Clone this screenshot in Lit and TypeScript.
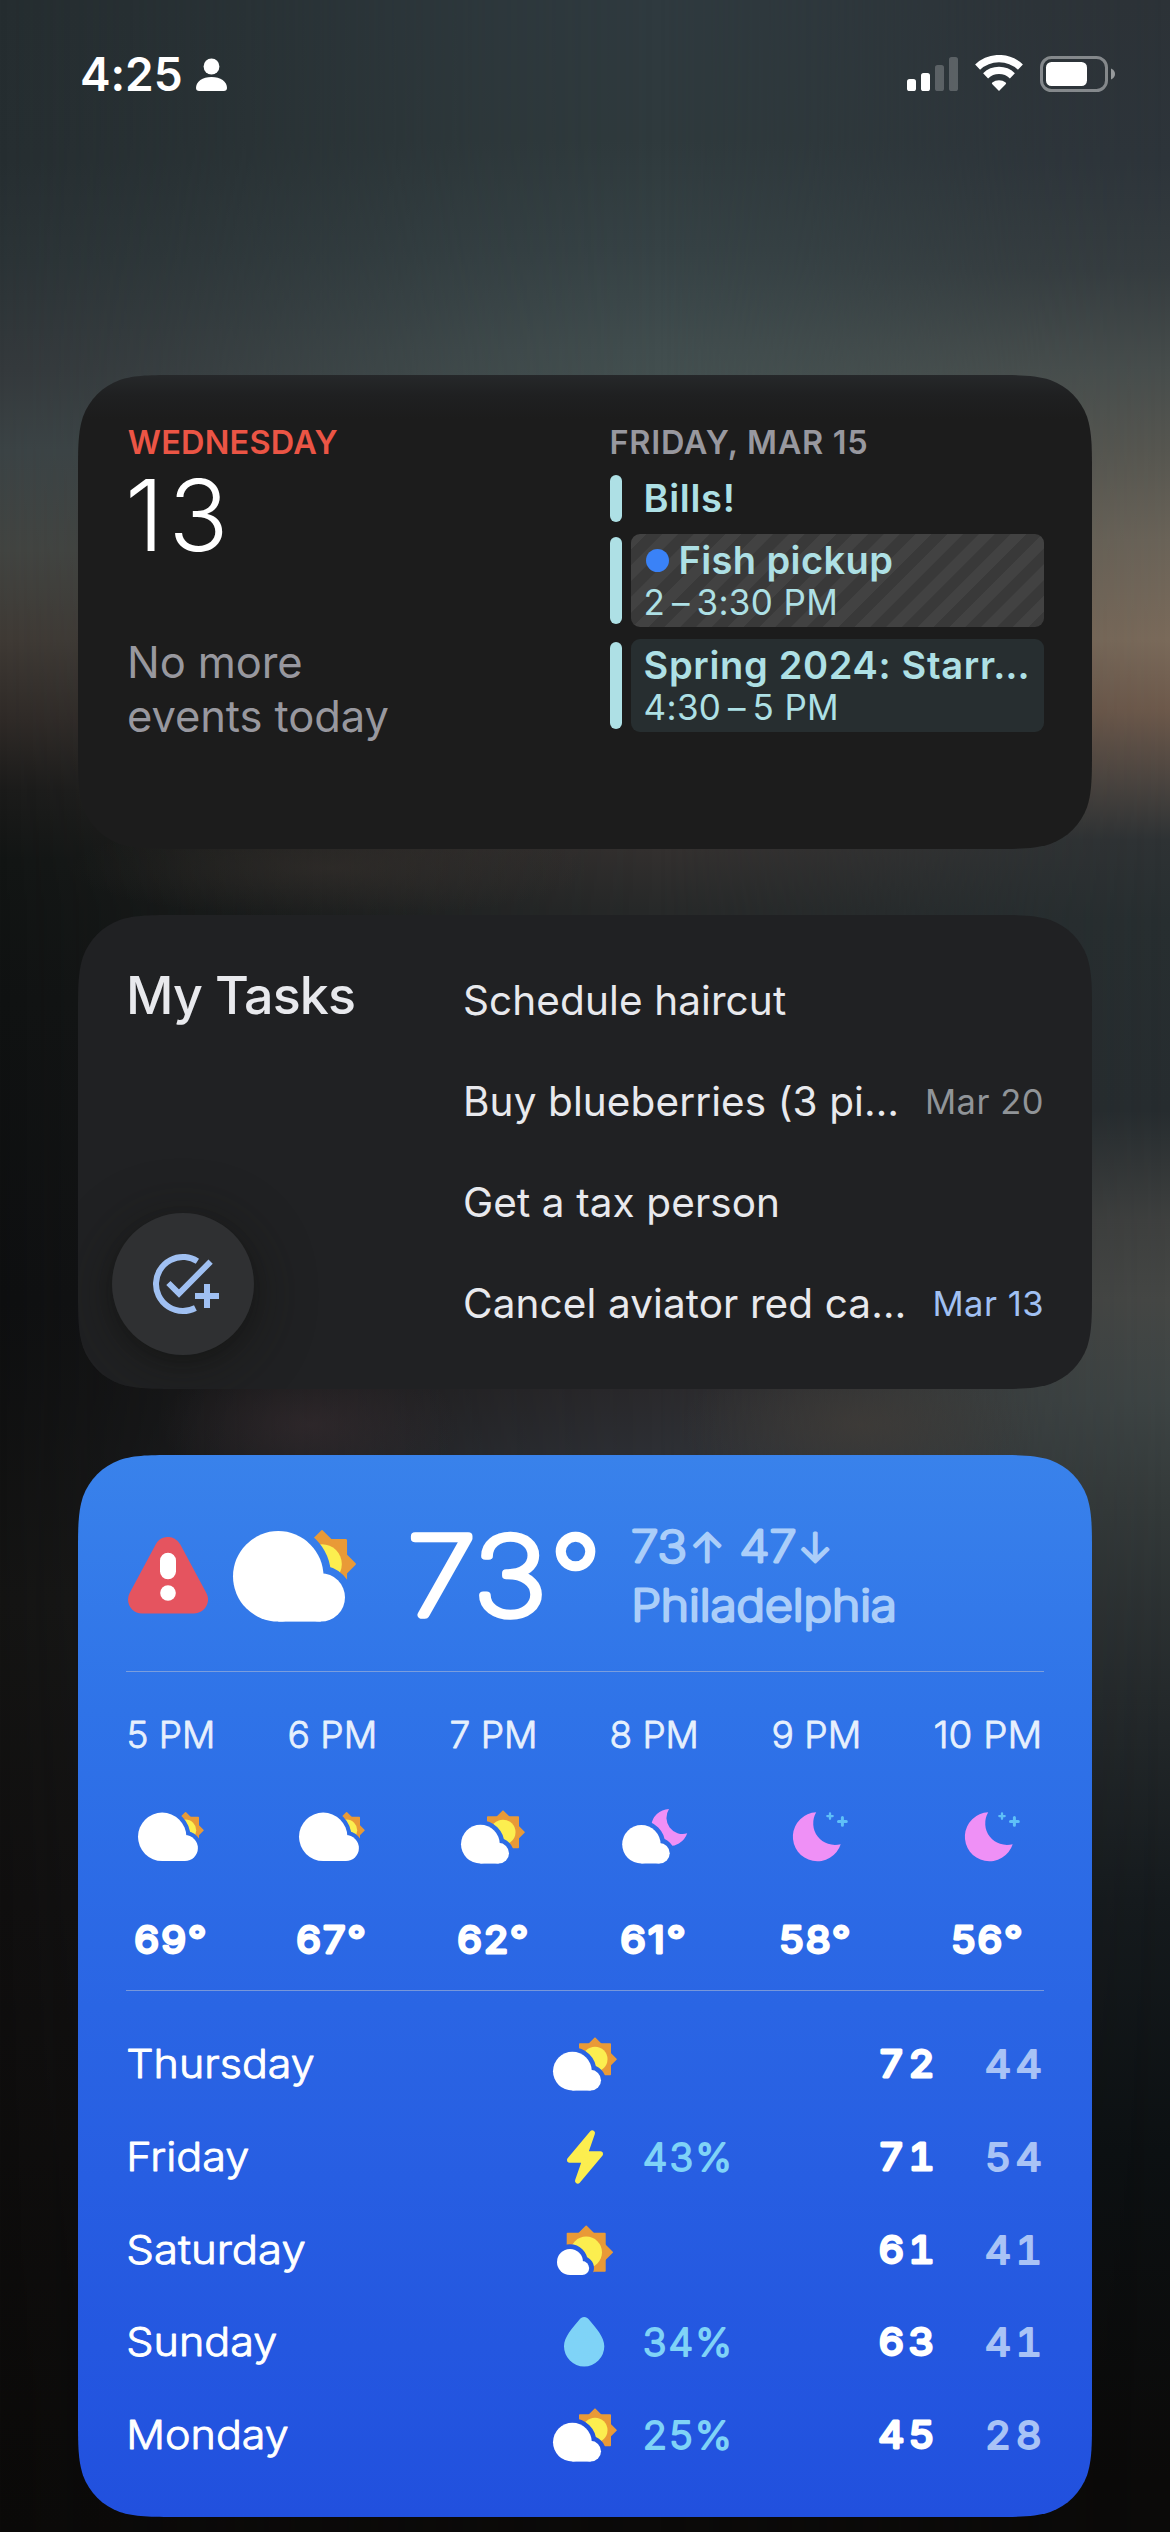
import { LitElement, html, svg, css, unsafeCSS, nothing } from "lit";
import { customElement, property } from "lit/decorators.js";

const CARD_W = 1014;

/** Rounded rectangle with continuous-curvature corners, as a path string. */
function smoothRect(w: number, h: number, r: number): string {
  const a = 1.528665 * r, b = 1.088493 * r, c = 0.868407 * r, d = 0.631494 * r;
  const e = 0.074911 * r, f = 0.372824 * r, g = 0.16906 * r;
  const n = (v: number) => v.toFixed(2);
  const p = (x: number, y: number) => `${n(x)} ${n(y)}`;
  return [
    `M${p(a, 0)}L${p(w - a, 0)}`,
    `C${p(w - b, 0)} ${p(w - c, 0)} ${p(w - d, e)}`,
    `C${p(w - f, g)} ${p(w - g, f)} ${p(w - e, d)}`,
    `C${p(w, c)} ${p(w, b)} ${p(w, a)}L${p(w, h - a)}`,
    `C${p(w, h - b)} ${p(w, h - c)} ${p(w - e, h - d)}`,
    `C${p(w - g, h - f)} ${p(w - f, h - g)} ${p(w - d, h - e)}`,
    `C${p(w - c, h)} ${p(w - b, h)} ${p(w - a, h)}L${p(a, h)}`,
    `C${p(b, h)} ${p(c, h)} ${p(d, h - e)}`,
    `C${p(f, h - g)} ${p(g, h - f)} ${p(e, h - d)}`,
    `C${p(0, h - c)} ${p(0, h - b)} ${p(0, h - a)}L${p(0, a)}`,
    `C${p(0, b)} ${p(0, c)} ${p(e, d)}`,
    `C${p(g, f)} ${p(f, g)} ${p(d, e)}`,
    `C${p(c, 0)} ${p(b, 0)} ${p(a, 0)}Z`,
  ].join("");
}
const MEDIUM_SHAPE = unsafeCSS(`path("${smoothRect(CARD_W, 474, 66)}")`);
const LARGE_SHAPE = unsafeCSS(`path("${smoothRect(CARD_W, 1062, 66)}")`);

/**
 * Text with rounded terminals: a light weight thickened by a round-joined
 * stroke. `cap` is the outer cap height, `w` the outer width of the ink.
 */
function soft(text: string, w: number, cap: number, weight: number, stroke: number, cls = "") {
  const size = (cap - stroke) / 0.727;
  const bearing = 0.055 * size;
  return html`<svg class="soft ${cls}" width=${w} height=${cap}>
    <text x=${stroke / 2 - bearing} y=${cap - stroke / 2} font-size=${size} font-weight=${weight}
      stroke-width=${stroke} textLength=${w - stroke + 2 * bearing} lengthAdjust="spacingAndGlyphs">${text}</text>
  </svg>`;
}

type Sky = "mostly-cloudy" | "partly-cloudy" | "mostly-sunny" | "cloudy-night" | "clear-night" | "storm" | "rain";

const cloud = (cx: number, cy: number, r: number) => {
  const s = 0.535 * r;
  const sx = cx + 0.94 * r;
  return svg`<circle cx=${cx} cy=${cy} r=${r}/><circle cx=${sx} cy=${cy + r - s} r=${s}/><rect x=${cx} y=${cy} width=${sx - cx} height=${r}/>`;
};

const sun = (cx: number, cy: number, tip: number, half: number, core: number) => svg`
  <g fill="#e99a37" stroke="#e99a37" stroke-width="1.6" stroke-linejoin="round">
    <rect x=${cx - half + 0.8} y=${cy - half + 0.8} width=${2 * half - 1.6} height=${2 * half - 1.6}/>
    <path d="M${cx} ${cy - tip + 1}L${cx + tip - 1} ${cy}L${cx} ${cy + tip - 1}L${cx - tip + 1} ${cy}Z"/>
  </g>
  <circle cx=${cx} cy=${cy} r=${core} fill="#fcee4f"/>`;

const behindCloud = (w: number, h: number, c: [number, number, number], gap: number, back: unknown) => svg`
  <mask id="cut" maskUnits="userSpaceOnUse" x="0" y="0" width=${w} height=${h}>
    <rect width=${w} height=${h} fill="#fff"/>
    <g fill="#000" stroke="#000" stroke-width=${gap * 2}>${cloud(...c)}</g>
  </mask>
  <g mask="url(#cut)">${back}</g>
  <g fill="#fff">${cloud(...c)}</g>`;

const star = (x: number, y: number, r: number) => svg`
  <path d="M${x} ${y - r + 1.3}V${y + r - 1.3}M${x - r + 1.3} ${y}H${x + r - 1.3}" stroke="#5fc0f8" stroke-width=${r * 0.58} stroke-linecap="round"/>`;

const SKIES: Record<Sky, { w: number; h: number; art: () => unknown }> = {
  "mostly-cloudy": { w: 66, h: 49, art: () => behindCloud(66, 49, [24.2, 24.8, 24.2], 4, sun(47.6, 18.2, 18.3, 13.4, 10.6)) },
  "partly-cloudy": { w: 64, h: 54, art: () => behindCloud(64, 54, [19.4, 34.2, 19.4], 4.6, sun(42, 22.2, 22, 16, 12.5)) },
  "mostly-sunny": { w: 56, h: 50, art: () => behindCloud(56, 56, [13, 37, 13], 4.8, sun(29.2, 27.3, 27, 19.5, 15.8)) },
  "cloudy-night": {
    w: 66, h: 55,
    art: () => behindCloud(68, 55, [20.4, 35.3, 19.2], 4.6, svg`<path fill="#ef90f6" d="M48 0A16.2 16.2 0 0 0 66.2 24.3A18.5 18.5 0 1 1 48 0Z"/>`),
  },
  "clear-night": {
    w: 64, h: 49,
    art: () => svg`<g transform="translate(9)"><path fill="#ef90f6" d="M23.2 .3A21.7 21.7 0 0 0 47.7 32.2A24.5 24.5 0 1 1 23.2 .3Z"/>${star(37, 4.1, 4)}${star(49.4, 9.4, 5.2)}</g>`,
  },
  storm: {
    w: 36, h: 54,
    art: () => svg`<path fill="#fcee4f" stroke="#fcee4f" stroke-width="5.4" stroke-linejoin="round" d="M25.3 3L18 24H33.3L10.7 51L18 30H2.7Z"/>`,
  },
  rain: {
    w: 41, h: 50,
    art: () => svg`<path fill="#7fd3f7" d="M20.2 0c2 0 3.5 1 4.7 2.6C32 11 40.3 20 40.3 29.3A20.15 20.15 0 0 1 0 29.3C0 20 8.4 11 15.5 2.6C16.7 1 18.2 0 20.2 0Z"/>`,
  },
};

@customElement("sky-icon")
class SkyIcon extends LitElement {
  static styles = css`
    :host { display: block; }
    .art { display: block; overflow: visible; }
  `;
  @property() sky: Sky = "mostly-cloudy";
  @property({ type: Number }) scale = 1;
  render() {
    const { w, h, art } = SKIES[this.sky];
    return html`<svg class="art" viewBox="0 0 ${w} ${h}" width=${w * this.scale} height=${h * this.scale} fill="none">${art()}</svg>`;
  }
}

@customElement("status-bar")
class StatusBar extends LitElement {
  static styles = css`
    :host { display: flex; justify-content: space-between; padding: 55px 54px 0 80px; height: 320px; box-sizing: border-box; color: #fff; }
    .left { display: flex; height: 40px; }
    .time { font-size: 46px; font-weight: 600; line-height: 39px; letter-spacing: -0.1px; margin-right: 13px; }
    .right { display: flex; gap: 17px; height: 40px; }
  `;
  render() {
    return html`
      <div class="left">
        <span class="time">4:25</span>
        <svg width="31" height="40" viewBox="0 0 31 40" fill="#fff">
          <ellipse cx="15.5" cy="11.5" rx="7.9" ry="8"/>
          <path d="M0 33C0 26.5 6.5 22 15.5 22S31 26.5 31 33C31 35 29.8 36 27.8 36H3.2C1.2 36 0 35 0 33Z"/>
        </svg>
      </div>
      <div class="right">
        <svg width="51" height="40" fill="#fff">
          <rect x="0" y="24" width="9" height="12" rx="2.6"/>
          <rect x="14" y="18" width="9" height="18" rx="2.6"/>
          <rect x="28" y="10" width="9" height="26" rx="2.6" fill-opacity=".22"/>
          <rect x="42" y="2" width="9" height="34" rx="2.6" fill-opacity=".22"/>
        </svg>
        <svg width="48" height="40" viewBox="0 0 48 40" fill="none">
          <path d="M2.6 12.1A31 31 0 0 1 45.4 12.1" stroke="#fff" stroke-width="7.2"/>
          <path d="M10.6 20.8A19.4 19.4 0 0 1 37.4 20.8" stroke="#fff" stroke-width="7.2"/>
          <path d="M24 36L17.1 28.9Q16.6 28.2 17.3 27.6A11 11 0 0 1 30.7 27.6Q31.4 28.2 30.9 28.9Z" fill="#fff"/>
        </svg>
        <svg width="76" height="40" viewBox="0 0 76 40">
          <rect x="1.5" y="2.5" width="65" height="33" rx="10" fill="none" stroke="#fff" stroke-opacity=".42" stroke-width="3"/>
          <rect x="6" y="7" width="41" height="24" rx="5.5" fill="#fff"/>
          <path d="M71 13.5C73.6 14.5 75 16.6 75 19S73.6 23.5 71 24.5Z" fill="#fff" fill-opacity=".5"/>
        </svg>
      </div>`;
  }
}

interface CalendarEvent { title: string; time?: string; kind: "all-day" | "tentative" | "accepted"; unread?: boolean }

@customElement("calendar-widget")
class CalendarWidget extends LitElement {
  static styles = css`
    :host {
      display: grid; grid-template-columns: 482.5px 434.5px; align-content: start;
      box-sizing: border-box; width: 1014px; height: 474px; padding: 47.5px 48px 0 49px;
      background: linear-gradient(#26282a, #1f2021 20px, #1c1c1c 44px);
      clip-path: ${MEDIUM_SHAPE};
    }
    .heading { font-size: 32.5px; font-weight: 600; line-height: 40px; white-space: nowrap; }
    .today { color: #eb5545; letter-spacing: 0.2px; padding-left: 0.8px; }
    .next { color: #98989f; letter-spacing: 0.7px; margin-bottom: 12.5px; }
    .date { font-size: 99px; font-weight: 300; line-height: 100px; letter-spacing: 4.5px; color: #fff; margin: 2px 0 70px -2px; }
    .empty { font-size: 43.5px; line-height: 54px; letter-spacing: -0.1px; color: #98989f; }
    .events { display: flex; flex-direction: column; gap: 12px; color: #aee0e5; }
    .event { display: flex; gap: 9px; }
    .bar { width: 12px; margin: 3px 0; border-radius: 6px; background: #aee0e5; }
    .all-day .bar { margin: 0; }
    .body { flex: 1; border-radius: 9px; padding: 4.7px 0 0 13px; height: 93px; box-sizing: border-box; white-space: nowrap; }
    .all-day .body { height: 47px; padding-top: 0; }
    .all-day .title { line-height: 47px; }
    .tentative .body { background: repeating-linear-gradient(135deg, #424242 0 10.6px, #393939 11.2px 21.8px, #424242 22.4px); }
    .accepted .body { background: #272e30; }
    .title { display: flex; align-items: center; font-size: 38px; font-weight: 600; line-height: 43px; letter-spacing: 0.68px; }
    .tentative .title { letter-spacing: 0.4px; }
    .dot { width: 23px; height: 23px; border-radius: 50%; background: #3a82f7; margin: 0 10px 0 2px; }
    .time { font-size: 35px; line-height: 40px; letter-spacing: 0.35px; }
  `;
  private events: CalendarEvent[] = [
    { title: "Bills!", kind: "all-day" },
    { title: "Fish pickup", time: "2\u2009–\u20093:30 PM", kind: "tentative", unread: true },
    { title: "Spring 2024: Starr…", time: "4:30\u2009–\u20095 PM", kind: "accepted" },
  ];
  render() {
    return html`
      <div>
        <div class="heading today">WEDNESDAY</div>
        <div class="date">13</div>
        <div class="empty">No more<br>events today</div>
      </div>
      <div>
        <div class="heading next">FRIDAY, MAR 15</div>
        <div class="events">
          ${this.events.map((e) => html`
            <div class="event ${e.kind}">
              <div class="bar"></div>
              <div class="body">
                <div class="title">${e.unread ? html`<span class="dot"></span>` : nothing}${e.title}</div>
                ${e.time ? html`<div class="time">${e.time}</div>` : nothing}
              </div>
            </div>`)}
        </div>
      </div>`;
  }
}

@customElement("tasks-widget")
class TasksWidget extends LitElement {
  static styles = css`
    :host {
      display: grid; grid-template-columns: 337px 581px;
      box-sizing: border-box; width: 1014px; height: 474px; padding: 0 48px 0 48px;
      background: #202123; color: #e8e9ed; clip-path: ${MEDIUM_SHAPE};
    }
    .side { display: flex; flex-direction: column; justify-content: space-between; padding: 50.5px 0 34px; }
    .name { font-size: 52px; font-weight: 500; line-height: 60px; letter-spacing: -0.9px; }
    .add {
      display: grid; place-items: center; width: 142px; height: 142px; margin-left: -14px; border-radius: 50%;
      background: #2f3032; box-shadow: 0 6px 14px rgba(12, 12, 10, 0.2), 0 10px 54px 8px rgba(20, 20, 16, 0.4);
    }
    .list { display: flex; flex-direction: column; gap: 51px; padding-top: 60.5px; }
    .task { display: flex; justify-content: space-between; align-items: center; height: 50px; white-space: nowrap; }
    .label { font-size: 40.5px; line-height: 50px; letter-spacing: 0.1px; }
    .due { font-size: 34.5px; line-height: 50px; letter-spacing: 0.5px; color: #909498; }
    .soon { color: #a0c0f2; }
  `;
  private tasks = [
    { label: "Schedule haircut" },
    { label: "Buy blueberries (3 pi…", due: "Mar 20" },
    { label: "Get a tax person" },
    { label: "Cancel aviator red ca…", due: "Mar 13", soon: true },
  ];
  render() {
    return html`
      <div class="side">
        <div class="name">My Tasks</div>
        <div class="add">
          <svg width="80" height="80" viewBox="-40 -40 80 80" fill="none" stroke="#a0c0f2" stroke-width="6">
            <path d="M14.4 -22.8A27 27 0 1 0 12.4 24"/>
            <path d="M-14.6 -1L-4 9.6L27.6 -22.4"/>
            <path d="M24 0V24M12 12H36"/>
          </svg>
        </div>
      </div>
      <div class="list">
        ${this.tasks.map((t) => html`
          <div class="task">
            <span class="label">${t.label}</span>
            ${t.due ? html`<span class="due ${t.soon ? "soon" : ""}">${t.due}</span>` : nothing}
          </div>`)}
      </div>`;
  }
}

@customElement("weather-widget")
class WeatherWidget extends LitElement {
  static styles = css`
    :host {
      display: block; box-sizing: border-box; width: 1014px; height: 1062px; padding: 0 48px;
      background: linear-gradient(#3982eb, #2f73e8 24%, #2a65e4 52%, #2150de); color: #fff;
      clip-path: ${LARGE_SHAPE};
    }
    .soft { display: block; overflow: visible; fill: #fff; stroke: #fff; }
    .soft text { font-family: Inter, sans-serif; stroke-linejoin: round; fill: inherit; stroke: inherit; }
    .now { display: flex; align-items: center; height: 216px; box-sizing: border-box; padding: 25px 0 0 2px; }
    .alert { display: block; margin-right: 25px; }
    .current { margin-left: 55px; }
    .place { display: flex; flex-direction: column; gap: 24px; margin-left: 40px; }
    .pale { fill: #abcef9; stroke: #abcef9; }
    .rule { height: 1px; background: rgba(196, 200, 210, 0.5); }
    .hours { display: flex; justify-content: space-between; padding: 48.5px 3.5px 35px 2px; }
    .hour { display: flex; flex-direction: column; align-items: center; }
    .at { fill: #e6f0fd; stroke: #e6f0fd; }
    .slot { display: grid; place-items: center; width: 66px; height: 56px; margin: 61px 0 60px; }
    .days { padding: 27px 0 0 2px; }
    .day { display: grid; grid-template-columns: 411px 91px 14px 235px 57px 50px 57px; align-items: center; height: 92.8px; }
    .icon { justify-self: center; }
    .chance { grid-column: 4; fill: #7fd3f7; stroke: #7fd3f7; }
    .high { grid-column: 5; }
    .low { grid-column: 7; fill: #a9c3f6; stroke: #a9c3f6; }
    .high text, .low text { font-feature-settings: "tnum"; letter-spacing: 0.1em; }
    .temp text, .chance text { letter-spacing: 0.05em; }
  `;
  private hours: [string, number, Sky, string, number][] = [
    ["5 PM", 85.7, "mostly-cloudy", "69°", 72.7],
    ["6 PM", 86.7, "mostly-cloudy", "67°", 70],
    ["7 PM", 85, "partly-cloudy", "62°", 71.5],
    ["8 PM", 86.3, "cloudy-night", "61°", 66],
    ["9 PM", 86.7, "clear-night", "58°", 71.7],
    ["10 PM", 105.7, "clear-night", "56°", 71.7],
  ];
  private days: [string, number, Sky, string, string, string][] = [
    ["Thursday", 185, "partly-cloudy", "", "72", "44"],
    ["Friday", 119.5, "storm", "43%", "71", "54"],
    ["Saturday", 176, "mostly-sunny", "", "61", "41"],
    ["Sunday", 147.5, "rain", "34%", "63", "41"],
    ["Monday", 159, "partly-cloudy", "25%", "45", "28"],
  ];
  render() {
    return html`
      <div class="now">
        <svg class="alert" width="80" height="77" viewBox="0 0 80 77">
          <path d="M40 14L66 62.5H14Z" fill="#e5545f" stroke="#e5545f" stroke-width="28" stroke-linejoin="round"/>
          <rect x="32" y="15.7" width="16" height="26.6" rx="8" fill="#fff"/>
          <circle cx="40" cy="56" r="7.8" fill="#fff"/>
        </svg>
        <sky-icon sky="mostly-cloudy" scale="1.87"></sky-icon>
        <svg class="soft current" width="181" height="86">
          <text y="82.2" font-size="108" font-weight="100" stroke-width="7.6"><tspan x="-3.5" textLength="139" lengthAdjust="spacingAndGlyphs">73</tspan><tspan x="140">°</tspan></text>
        </svg>
        <div class="place">
          <svg class="soft pale" width="197" height="34.3">
            <text y="32.8" font-size="43" font-weight="200" stroke-width="3"><tspan x="-1" textLength="56" lengthAdjust="spacingAndGlyphs">73</tspan><tspan x="58.5" font-size="40">↑</tspan> <tspan x="107.5" textLength="57" lengthAdjust="spacingAndGlyphs">47</tspan><tspan x="166.5" font-size="40">↓</tspan></text>
          </svg>
          ${soft("Philadelphia", 264, 34.3, 200, 3, "pale")}
        </div>
      </div>
      <div class="rule"></div>
      <div class="hours">
        ${this.hours.map(([at, w, sky, temp, tw]) => html`
          <div class="hour">
            ${soft(at, w, 27.3, 300, 0.8, "at")}
            <div class="slot"><sky-icon sky=${sky}></sky-icon></div>
            ${soft(temp, tw, 29.8, 400, 2.8, "temp")}
          </div>`)}
      </div>
      <div class="rule"></div>
      <div class="days">
        ${this.days.map(([name, w, sky, chance, high, low]) => html`
          <div class="day">
            ${soft(name, w, 29.8, 300, 0.9)}
            <sky-icon class="icon" sky=${sky}></sky-icon>
            ${chance ? soft(chance, 88.6, 29.8, 300, 1.8, "chance") : nothing}
            ${soft(high, 59, 29.8, 400, 2.8, "high")}
            ${soft(low, 59, 29.8, 400, 1.9, "low")}
          </div>`)}
      </div>`;
  }
}

@customElement("app-root")
class AppRoot extends LitElement {
  static styles = css`
    :host {
      display: block; position: relative; width: 1170px; height: 2532px; overflow: hidden;
      font-family: Inter, "Liberation Sans", sans-serif; background: #0c0c0c;
    }
    .wall { position: absolute; inset: 0; }
    .wall-left {
      background: linear-gradient(#252d30, #262e31 160px, #2b3336 260px, #34393c 370px, #3b4345 450px, #424441 550px, #3f3a35 640px, #2f2a27 720px, #1b1b1a 790px, #121514 860px, #101212 1000px, #0e0f10 1300px, #141413 1600px, #100f0f 1900px, #0b0a09 2532px);
    }
    .wall-mid {
      background: linear-gradient(#2f3a3f, #2f3a3d 140px, #364245 250px, #414d4e 350px, #434f4f 380px, #3a4040 600px, #33302f 850px, #272929 910px, #2a292c 1390px, #2d2f34 1450px, #0b0a09 2400px);
      mask-image: linear-gradient(90deg, transparent, rgba(0, 0, 0, 0.22) 160px, rgba(0, 0, 0, 0.78) 480px, #000 660px);
    }
    .wall-right {
      background: linear-gradient(#2c3237, #2d343a 160px, #353c3f 270px, #474d4c 370px, #565650 450px, #6a6358 540px, #7a6a5a 640px, #6d594b 710px, #4c4540 780px, #2e3234 840px, #272e30 920px, #262c2f 1110px, #3e403f 1220px, #454745 1300px, #3d4444 1400px, #343a3a 1500px, #24292b 1700px, #151a1d 1900px, #0c1012 2150px, #0b0a09 2480px);
      mask-image: linear-gradient(90deg, transparent 660px, rgba(0, 0, 0, 0.3) 820px, rgba(0, 0, 0, 0.85) 1040px, #000 1170px);
    }
    .wall-glow {
      background:
        radial-gradient(150px 70px at 310px 1425px, rgba(58, 46, 50, 0.55), transparent),
        radial-gradient(180px 70px at 860px 1425px, rgba(68, 62, 56, 0.6), transparent),
        radial-gradient(260px 50px at 330px 868px, rgba(56, 50, 46, 0.5), transparent);
    }
    .screen { position: relative; display: flex; flex-direction: column; align-items: center; }
    .status { align-self: stretch; }
    .widgets { display: flex; flex-direction: column; gap: 66px; margin-top: 55px; }
  `;
  render() {
    return html`
      <div class="wall wall-left"></div>
      <div class="wall wall-mid"></div>
      <div class="wall wall-right"></div>
      <div class="wall wall-glow"></div>
      <div class="screen">
        <status-bar class="status"></status-bar>
        <div class="widgets">
          <calendar-widget></calendar-widget>
          <tasks-widget></tasks-widget>
          <weather-widget></weather-widget>
        </div>
      </div>`;
  }
}
